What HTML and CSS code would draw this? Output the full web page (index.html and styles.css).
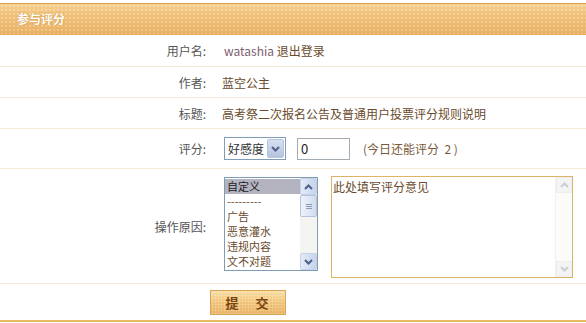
FILE: index.html
```html
<!DOCTYPE html>
<html lang="zh">
<head>
<meta charset="utf-8">
<title>参与评分</title>
<link rel="stylesheet" href="styles.css">
</head>
<body>
<div class="panel">
  <div class="head">参与评分</div>
  <div class="row r1">
    <div class="label">用户名:</div>
    <div class="value"><span class="user">watashia</span> 退出登录</div>
  </div>
  <div class="row r2">
    <div class="label">作者:</div>
    <div class="value">蓝空公主</div>
  </div>
  <div class="row r3">
    <div class="label">标题:</div>
    <div class="value">高考祭二次报名公告及普通用户投票评分规则说明</div>
  </div>
  <div class="row r4">
    <div class="label">评分:</div>
    <div class="value score">
      <div class="select">
        <span class="sel-text">好感度</span>
        <span class="sel-btn"><svg width="9" height="6" viewBox="0 0 9 6"><path d="M1 1 L4.5 4.5 L8 1" fill="none" stroke="#4d6185" stroke-width="2"/></svg></span>
      </div>
      <div class="input">0</div>
      <span class="note">(今日还能评分&nbsp; 2 )</span>
    </div>
  </div>
  <div class="row r5">
    <div class="label">操作原因:</div>
    <div class="value reason">
      <div class="listbox">
        <div class="items">
          <div class="item sel">自定义</div>
          <div class="item">---------</div>
          <div class="item">广告</div>
          <div class="item">恶意灌水</div>
          <div class="item">违规内容</div>
          <div class="item">文不对题</div>
        </div>
        <div class="sbar">
          <span class="sb-btn"><svg width="9" height="6" viewBox="0 0 9 6"><path d="M1 5 L4.5 1.5 L8 5" fill="none" stroke="#4d6185" stroke-width="2"/></svg></span>
          <span class="sb-track"><span class="sb-thumb"><i></i><i></i><i></i></span></span>
          <span class="sb-btn"><svg width="9" height="6" viewBox="0 0 9 6"><path d="M1 1 L4.5 4.5 L8 1" fill="none" stroke="#4d6185" stroke-width="2"/></svg></span>
        </div>
      </div>
      <div class="textbox">
        <div class="tb-text">此处填写评分意见</div>
        <div class="tb-bar">
          <span class="tb-btn"><svg width="9" height="6" viewBox="0 0 9 6"><path d="M1 5 L4.5 1.5 L8 5" fill="none" stroke="#c8ccd4" stroke-width="2"/></svg></span>
          <span class="tb-track"></span>
          <span class="tb-btn"><svg width="9" height="6" viewBox="0 0 9 6"><path d="M1 1 L4.5 4.5 L8 1" fill="none" stroke="#c8ccd4" stroke-width="2"/></svg></span>
        </div>
      </div>
    </div>
  </div>
  <div class="row r6">
    <div class="label"></div>
    <div class="value"><span class="submit">提　交</span></div>
  </div>
</div>
</body>
</html>
```
FILE: styles.css
```css
html, body {
  margin: 0;
  padding: 0;
  background: #fff;
}
body {
  font-family: "Noto Sans CJK SC", "Liberation Sans", sans-serif;
  font-size: 12px;
  color: #555;
}
.panel {
  padding-top: 3px;
  border-bottom: 2px solid #e8b864;
}
.head {
  height: 30px;
  border-top: 1px solid #dda24c;
  border-bottom: 1px solid #e4ab5a;
  background-color: #f0bd6c;
  background-image:
    radial-gradient(circle, rgba(255,255,255,0.25) 0.8px, transparent 1.2px),
    linear-gradient(#f6d08e, #f0c078 40%, #e9b063);
  background-size: 4px 4px, 100% 100%;
  color: #fff;
  font-weight: bold;
  line-height: 30px;
  padding-left: 17px;
  text-shadow: 0 0 2px #c98a30;
}
.row {
  display: grid;
  grid-template-columns: 222px 1fr;
  align-items: center;
  border-bottom: 1px solid #f6e8d4;
}
.r1 { height: 31px; }
.r2 { height: 30px; }
.r3 { height: 30px; }
.r4 { height: 39px; }
.r5 { height: 114px; }
.r6 { height: 36px; border-bottom: none; }
.label {
  text-align: right;
  padding-right: 16px;
  color: #555;
}
.value {
  color: #6a4a2c;
}
.user {
  color: #7d6070;
  padding-left: 2px;
}
.score {
  display: flex;
  align-items: center;
  padding-left: 2px;
}
.select {
  width: 60px;
  height: 21px;
  border: 1px solid #7f9db9;
  display: flex;
  align-items: stretch;
  background: #fff;
}
.sel-text {
  flex: 1;
  line-height: 21px;
  padding-left: 3px;
  color: #333;
  font-size: 12px;
}
.sel-btn {
  width: 15px;
  margin: 1px;
  border: 1px solid #b7c5dc;
  border-radius: 2px;
  background: linear-gradient(#d7e0f2, #b5c3e0);
  display: flex;
  align-items: center;
  justify-content: center;
}
.input {
  width: 48px;
  height: 20px;
  margin-left: 11px;
  border: 1px solid #a5acb2;
  line-height: 20px;
  padding-left: 3px;
  color: #222;
  font-size: 13px;
}
.note {
  margin-left: 13px;
  color: #7a5a3a;
}
.reason {
  display: flex;
  align-items: flex-start;
  align-self: start;
  padding-left: 2px;
  padding-top: 7px;
}
.listbox {
  width: 92px;
  height: 92px;
  margin-top: 1px;
  border: 1px solid #7f9db9;
  display: flex;
}
.items {
  flex: 1;
  padding-top: 1px;
  font-size: 11px;
  color: #6a4a2c;
  overflow: hidden;
}
.item {
  height: 15px;
  line-height: 15px;
  padding-left: 2px;
  overflow: hidden;
}
.item.sel {
  background: #b4b4c0;
  color: #222;
}
.sbar {
  width: 17px;
  display: flex;
  flex-direction: column;
  background: #f4f4f0;
}
.sb-btn {
  height: 17px;
  box-sizing: border-box;
  border: 1px solid #c4d0e4;
  border-radius: 2px;
  background: linear-gradient(90deg, #e4ebf8, #c6d3ec);
  display: flex;
  align-items: center;
  justify-content: center;
}
.sb-track {
  flex: 1;
  display: flex;
  flex-direction: column;
}
.sb-thumb {
  height: 22px;
  box-sizing: border-box;
  border: 1px solid #b6c3da;
  border-radius: 2px;
  background: linear-gradient(90deg, #eef2fa, #d2dcee);
  display: flex;
  flex-direction: column;
  align-items: center;
  justify-content: center;
  gap: 1px;
}
.sb-thumb i {
  display: block;
  width: 6px;
  height: 1px;
  background: #8a9ab8;
}
.textbox {
  width: 240px;
  height: 100px;
  margin-left: 13px;
  border: 1px solid #dcb466;
  display: flex;
  background: #fff;
}
.tb-text {
  flex: 1;
  padding: 2px 0 0 1px;
  line-height: 16px;
  color: #6a4a2c;
}
.tb-bar {
  width: 16px;
  display: flex;
  flex-direction: column;
  background: #fbfbfa;
  border-left: 1px solid #f0f0ee;
}
.tb-btn {
  height: 16px;
  box-sizing: border-box;
  border: 1px solid #eceef0;
  background: #f4f4f4;
  display: flex;
  align-items: center;
  justify-content: center;
}
.tb-track { flex: 1; }
.submit {
  display: inline-block;
  margin-left: -12px;
  width: 74px;
  height: 23px;
  border: 1px solid #d9a55a;
  background-color: #f0c57a;
  background-image:
    radial-gradient(circle, rgba(255,255,255,0.3) 0.8px, transparent 1.2px),
    linear-gradient(#f8dc9e, #efc072 55%, #e8b060);
  background-size: 3px 3px, 100% 100%;
  color: #7a4412;
  font-weight: bold;
  font-size: 13px;
  line-height: 23px;
  text-align: center;
  letter-spacing: 2px;
  margin-top: 1px;
}
```
